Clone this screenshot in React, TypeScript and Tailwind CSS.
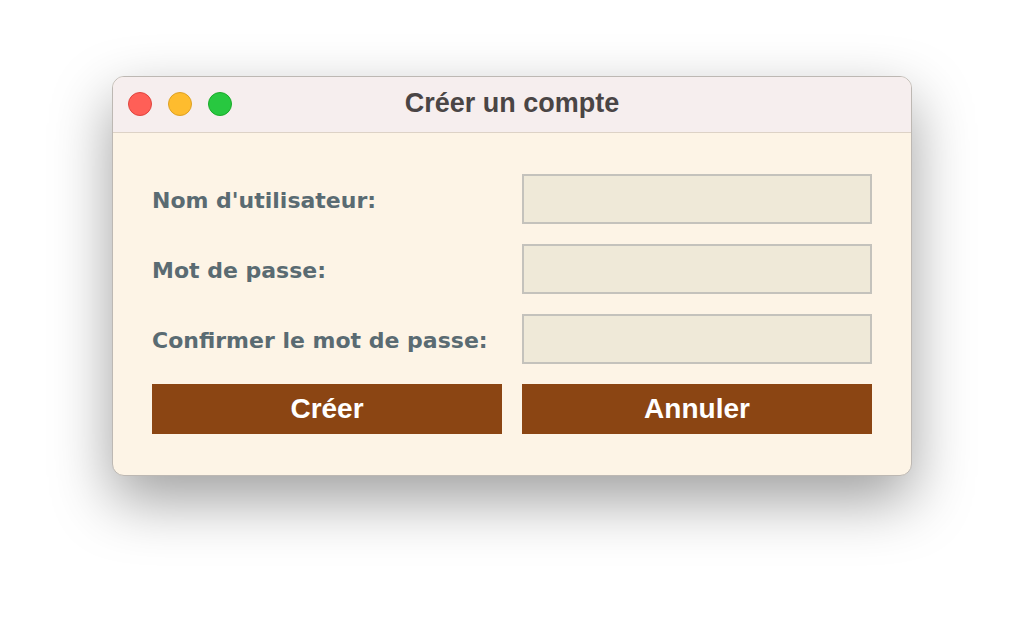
import React from "react";

const fields = ["Nom d'utilisateur:", "Mot de passe:", "Confirmer le mot de passe:"];

export default function App() {
  return (
    <div className="flex h-[624px] w-[1024px] items-start justify-center bg-white pt-[76px]">
      <div className="w-[800px] overflow-hidden rounded-[12px] border border-[#bdb8b3] bg-[#fdf4e6] shadow-[0_24px_60px_rgba(0,0,0,0.38)]">
        {/* Title bar */}
        <div className="relative flex h-[56px] items-center justify-center border-b border-[#ddd2c6] bg-[#f6eeee]">
          <div className="absolute left-[15px] top-[15px] flex gap-[16px]">
            <span className="h-[24px] w-[24px] rounded-full border border-[#e0443e] bg-[#ff5f57]" />
            <span className="h-[24px] w-[24px] rounded-full border border-[#dea123] bg-[#febc2e]" />
            <span className="h-[24px] w-[24px] rounded-full border border-[#1aab29] bg-[#28c840]" />
          </div>
          <span className="pb-[2px] font-['Liberation_Sans',Arial,sans-serif] text-[27px] font-bold text-[#4a4545]">
            Créer un compte
          </span>
        </div>

        {/* Form */}
        <div className="grid grid-cols-2 gap-x-[20px] gap-y-[20px] px-[39px] pb-[41px] pt-[41px]">
          {fields.map((label) => (
            <React.Fragment key={label}>
              <div className="flex h-[50px] items-center pt-[2px] font-['DejaVu_Sans',sans-serif] text-[22px] font-bold text-[#5a6b72]">
                {label}
              </div>
              <input
                type={label.startsWith("Nom") ? "text" : "password"}
                className="h-[50px] w-full border-2 border-[#c4c2bc] bg-[#efe9d8] px-2 outline-none"
              />
            </React.Fragment>
          ))}
          <button className="h-[50px] bg-[#8b4513] font-['Liberation_Sans',Arial,sans-serif] text-[28px] font-bold text-white">
            Créer
          </button>
          <button className="h-[50px] bg-[#8b4513] font-['Liberation_Sans',Arial,sans-serif] text-[28px] font-bold text-white">
            Annuler
          </button>
        </div>
      </div>
    </div>
  );
}
